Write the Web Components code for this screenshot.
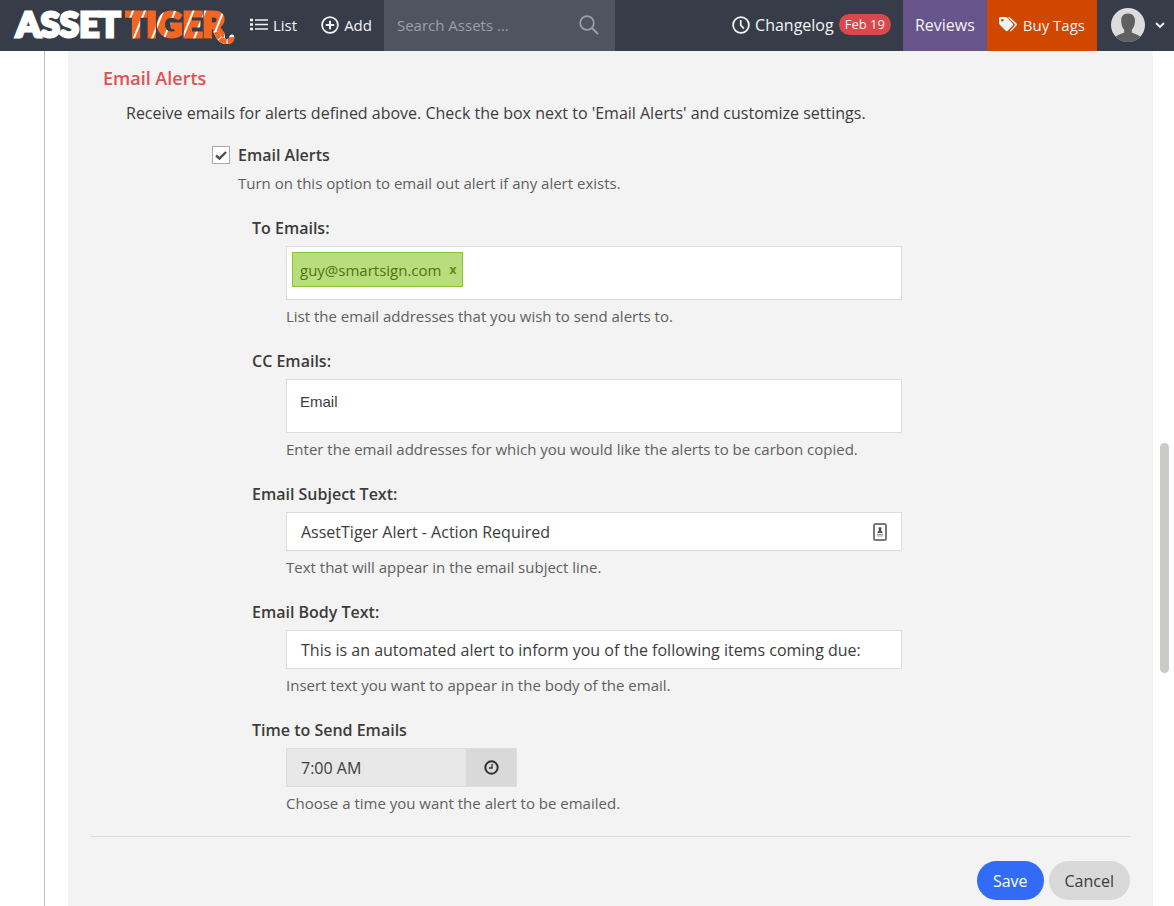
<!DOCTYPE html>
<html lang="en">
<head>
<meta charset="utf-8">
<meta name="viewport" content="width=device-width, initial-scale=1">
<title>AssetTiger - Alerts</title>
<style>
    :root {
        --bar-color: #363d49;
        --panel-color: #f3f3f3;
        --border-color: #dcdcdc;
        --text-color: #3c3c3c;
        --hint-color: #606060;
        --accent-color: #e05055;
    }
    html, body {
        margin: 0;
        background: #fff;
        color: var(--text-color);
        font-family: "Open Sans", "Noto Sans", sans-serif;
        font-size: 16px;
        line-height: 24px;
    }
    body {
        display: flex;
        flex-direction: column;
        min-height: 100vh;
        position: relative;
    }
</style>
</head>
<body>
<top-bar>
    <brand-logo slot="brand"></brand-logo>
    <nav-link icon="list" size="small">List</nav-link>
    <nav-link icon="add" size="small">Add</nav-link>
    <asset-search></asset-search>
    <nav-link slot="end" icon="clock" badge="Feb 19">Changelog</nav-link>
    <nav-link slot="end" tone="purple">Reviews</nav-link>
    <nav-link slot="end" icon="tags" tone="orange" size="small">Buy Tags</nav-link>
    <user-menu slot="end"></user-menu>
</top-bar>
<page-shell>
    <alert-settings>
        <tag-field label="To Emails:" value="guy@smartsign.com" hint="List the email addresses that you wish to send alerts to."></tag-field>
        <tag-field label="CC Emails:" hint="Enter the email addresses for which you would like the alerts to be carbon copied."></tag-field>
        <text-field label="Email Subject Text:" value="AssetTiger Alert - Action Required" autofill hint="Text that will appear in the email subject line."></text-field>
        <text-field label="Email Body Text:" value="This is an automated alert to inform you of the following items coming due:" hint="Insert text you want to appear in the body of the email."></text-field>
        <time-field label="Time to Send Emails" value="7:00 AM" hint="Choose a time you want the alert to be emailed."></time-field>
    </alert-settings>
</page-shell>
<scroll-thumb></scroll-thumb>

<script>
const icons = {
    list: `<svg width="18" height="18" viewBox="0 0 18 18" fill="none" stroke="currentColor" stroke-width="1.5">
        <path d="M5 4H18M5 8.500H18M5 13H18"/>
        <path d="M0 4h3M0 8.500h3M0 13h3" stroke-width="2.4"/></svg>`,
    add: `<svg width="18" height="18" viewBox="0 0 18 18" fill="none" stroke="currentColor" stroke-width="1.8">
        <circle cx="9" cy="9" r="7.9"/><path d="M9 4.8v8.4M4.8 9h8.4" stroke-width="2"/></svg>`,
    clock: `<svg width="18" height="18" viewBox="0 0 18 18" fill="none" stroke="currentColor" stroke-width="1.8">
        <circle cx="9" cy="9" r="7.9"/><path d="M8.7 4v5.2l3.2 3.4" stroke-width="1.7"/></svg>`,
    tags: `<svg width="19" height="15" viewBox="0 0 19 15" fill="currentColor">
        <path fill-rule="evenodd" d="M1.4 0h5.2c.6 0 1.200.3 1.600.7l5.500 5.700c.6.6.6 1.400 0 2l-5 5.300c-.6.6-1.400.6-2 0L.8 7.800C.4 7.400.1 6.700.1 6.100L0 1.500C0 .7.6 0 1.400 0zM3.400 2a1.300 1.300 0 1 0 0 2.600 1.300 1.300 0 0 0 0-2.600z"/>
        <path d="M8.700.2h1.500c.5 0 1 .3 1.400.7l5.900 5.700c.6.6.6 1.300 0 1.900l-5.200 5.400c-.5.5-1.200.5-1.700.1l4.700-4.900c.7-.8.7-1.800 0-2.500z"/></svg>`,
    search: `<svg width="20" height="20" viewBox="0 0 20 20" fill="none" stroke="currentColor" stroke-width="1.7">
        <circle cx="8" cy="8" r="6.800"/><path d="M13 13l6 6" stroke-width="2"/></svg>`,
    caret: `<svg width="10" height="7" viewBox="0 0 10 7" fill="none" stroke="currentColor" stroke-width="1.8"><path d="M1 1l4 4 4-4"/></svg>`,
    time: `<svg width="15" height="15" viewBox="0 0 15 15" fill="none" stroke="currentColor" stroke-width="2">
        <circle cx="7.500" cy="7.500" r="6.200"/><path d="M8 4v4H5" stroke-width="1.300"/></svg>`,
    contact: `<svg width="14" height="18" viewBox="0 0 14 18" fill="none">
        <rect x="1" y="1" width="12" height="16" rx="1.500" stroke="#777" stroke-width="2"/>
        <circle cx="7" cy="5.500" r="1.500" fill="#555"/><path d="M4 10L7 5.500l3 4.500z" fill="#555"/>
        <path d="M4 11.500h6M4 13h6" stroke="#999"/></svg>`
};

class TopBar extends HTMLElement {
    constructor() {
        super();
        this.attachShadow({ mode: 'open' });
    }

    connectedCallback() {
        this.shadowRoot.innerHTML = `
            <style>
                :host {
                    display: block;
                    background: var(--bar-color);
                    color: #f2f3f5;
                }
                header, nav {
                    display: flex;
                    height: 51px;
                }
                .end {
                    margin-left: auto;
                }
            </style>
            <header>
                <slot name="brand"></slot>
                <nav><slot></slot></nav>
                <nav class="end"><slot name="end"></slot></nav>
            </header>
        `;
    }
}

class BrandLogo extends HTMLElement {
    constructor() {
        super();
        this.attachShadow({ mode: 'open' });
    }

    connectedCallback() {
        this.shadowRoot.innerHTML = `
            <style>
                :host {
                    display: block;
                    width: 238px;
                }
                a {
                    display: flex;
                    position: relative;
                    gap: 5px;
                    padding-left: 16px;
                    color: #fff;
                    font-family: Lato, sans-serif;
                    font-weight: 900;
                    font-size: 35px;
                    line-height: 47px;
                    text-decoration: none;
                    -webkit-text-stroke: 3px #fff;
                }
                .tiger {
                    -webkit-text-stroke: 3px transparent;
                    color: transparent;
                    background: repeating-linear-gradient(112deg, #f26522 0 10px, #fff 11px 12px, #f26522 13px 21px, #fff 22px 23px, #f26522 24px 28px);
                    -webkit-background-clip: text;
                    background-clip: text;
                }
                svg {
                    position: absolute;
                    left: 211px;
                    top: 31px;
                }
            </style>
            <a href="#" aria-label="AssetTiger"><span>ASSET</span><span class="tiger">TIGER</span>
                <svg width="25" height="17" viewBox="0 0 25 17" fill="none">
                    <path d="M5 1C7 5 9 10 15 10.500c5 .3 6-2 5.800-4.500" stroke="#fff" stroke-width="5" stroke-linecap="round"/>
                    <path d="M5 1C7 5 9 10 15 10.500c5 .3 6-2 5.800-4.500" stroke="#f26522" stroke-width="5" stroke-dasharray="7 1"/>
                </svg>
            </a>
        `;
    }
}

class NavLink extends HTMLElement {
    constructor() {
        super();
        this.attachShadow({ mode: 'open' });
    }

    connectedCallback() {
        const icon = icons[this.getAttribute('icon')] || '';
        const badge = this.getAttribute('badge');

        this.shadowRoot.innerHTML = `
            <style>
                :host {
                    display: block;
                }
                :host([tone="purple"]) {
                    background: #67548a;
                }
                :host([tone="orange"]) {
                    background: #d04800;
                }
                :host([size="small"]) {
                    font-size: 15px;
                }
                a {
                    display: flex;
                    align-items: center;
                    gap: 5px;
                    height: 49px;
                    padding: 0 12px;
                    color: inherit;
                    text-decoration: none;
                    white-space: nowrap;
                }
                .badge {
                    padding: 0 6px;
                    border-radius: 11px;
                    background: #d9484b;
                    font-size: 13px;
                    line-height: 21px;
                }
            </style>
            <a href="#">${icon}<slot></slot>${badge ? `<span class="badge">${badge}</span>` : ''}</a>
        `;
    }
}

class AssetSearch extends HTMLElement {
    constructor() {
        super();
        this.attachShadow({ mode: 'open' });
    }

    connectedCallback() {
        this.shadowRoot.innerHTML = `
            <style>
                :host {
                    display: block;
                    width: 231px;
                    background: #4e5560;
                    font-size: 15px;
                }
                form {
                    display: flex;
                    align-items: center;
                    height: 50px;
                    padding: 0 16px 0 13px;
                }
                input {
                    flex: 1;
                    min-width: 0;
                    padding: 0;
                    border: 0;
                    background: none;
                    color: #fff;
                    font: inherit;
                }
                input::placeholder {
                    color: #9ba0a9;
                }
                button {
                    display: flex;
                    padding: 0;
                    border: 0;
                    background: none;
                    color: #9ba0a9;
                }
            </style>
            <form>
                <input type="text" placeholder="Search Assets ..." aria-label="Search Assets">
                <button type="button" aria-label="Search">${icons.search}</button>
            </form>
        `;
    }
}

class UserMenu extends HTMLElement {
    constructor() {
        super();
        this.attachShadow({ mode: 'open' });
    }

    connectedCallback() {
        this.shadowRoot.innerHTML = `
            <style>
                :host {
                    display: block;
                }
                button {
                    display: flex;
                    align-items: center;
                    gap: 10px;
                    height: 50px;
                    padding: 0 9px 0 14px;
                    border: 0;
                    background: none;
                    color: inherit;
                }
            </style>
            <button type="button" aria-label="Account">
                <svg width="34" height="34" viewBox="0 0 34 34">
                    <defs><clipPath id="round"><circle cx="17" cy="17" r="17"/></clipPath></defs>
                    <g clip-path="url(#round)">
                        <rect width="34" height="34" fill="#dcdcdc"/>
                        <path d="M17 5.500c-4.500 0-7 2.800-6.800 7 0 4.500 1.300 7.500 3 9.300v2.700c-3 1.500-7 2-9 5V34h25.600v-4.500c-2-3-6-3.500-9-5v-2.700c1.700-1.800 3.200-4.800 3.200-9.300 0-4.200-2.500-7-7-7z" fill="#606060"/>
                    </g>
                </svg>
                ${icons.caret}
            </button>
        `;
    }
}

class PageShell extends HTMLElement {
    constructor() {
        super();
        this.attachShadow({ mode: 'open' });
    }

    connectedCallback() {
        this.shadowRoot.innerHTML = `
            <style>
                :host {
                    display: flex;
                    flex: 1;
                }
                aside {
                    flex: 0 0 44px;
                    border-right: 1px solid #b4bfc4;
                }
                main {
                    flex: 1;
                    min-width: 0;
                    margin: 0 21px 0 23px;
                    background: var(--panel-color);
                }
            </style>
            <aside></aside>
            <main><slot></slot></main>
        `;
    }
}

class AlertSettings extends HTMLElement {
    constructor() {
        super();
        this.attachShadow({ mode: 'open' });
    }

    connectedCallback() {
        this.shadowRoot.innerHTML = `
            <style>
                :host {
                    display: block;
                    padding: 15px 23px 6px;
                }
                h2 {
                    margin: 0 12px;
                    color: var(--accent-color);
                    font-size: 18px;
                    font-weight: 600;
                    line-height: 24px;
                }
                p {
                    margin: 11px 35px 0;
                }
                .toggle {
                    display: grid;
                    grid-template-columns: 18px 1fr;
                    column-gap: 8px;
                    row-gap: 4px;
                    align-items: center;
                    margin: 18px 0 21px 121px;
                }
                .toggle label {
                    font-weight: 600;
                }
                .toggle small {
                    grid-column: 2;
                    color: var(--hint-color);
                    font-size: 15px;
                }
                input {
                    appearance: none;
                    width: 18px;
                    height: 18px;
                    margin: 0;
                    border: 1px solid #aaa;
                    background: #fff;
                }
                input:checked {
                    background: #fff url("data:image/svg+xml,%3Csvg xmlns='http://www.w3.org/2000/svg' width='16' height='16' fill='none' stroke='%23505050' stroke-width='2.400'%3E%3Cpath d='M3 8.500l3.500 3L13 5'/%3E%3C/svg%3E") center no-repeat;
                }
                .fields {
                    display: flex;
                    flex-direction: column;
                    gap: 21px;
                    margin-left: 161px;
                }
                footer {
                    display: flex;
                    justify-content: flex-end;
                    gap: 5px;
                    margin-top: 21px;
                    padding-top: 24px;
                    border-top: 1px solid var(--border-color);
                }
                button {
                    height: 39px;
                    padding: 0 16px;
                    border: 0;
                    border-radius: 20px;
                    background: #d9d9d9;
                    color: var(--text-color);
                    font: inherit;
                }
                .primary {
                    background: #326cf6;
                    color: #fff;
                }
            </style>
            <h2>Email Alerts</h2>
            <p>Receive emails for alerts defined above. Check the box next to 'Email Alerts' and customize settings.</p>
            <div class="toggle">
                <input type="checkbox" id="enabled" checked>
                <label for="enabled">Email Alerts</label>
                <small>Turn on this option to email out alert if any alert exists.</small>
            </div>
            <div class="fields"><slot></slot></div>
            <footer>
                <button type="button" class="primary">Save</button>
                <button type="button">Cancel</button>
            </footer>
        `;
    }
}

// Label on top, control in the middle, hint below. Subclasses supply the control.
class FormField extends HTMLElement {
    constructor() {
        super();
        this.attachShadow({ mode: 'open' });
    }

    connectedCallback() {
        this.shadowRoot.innerHTML = `
            <style>
                :host {
                    display: block;
                }
                label {
                    display: block;
                    font-weight: 600;
                }
                .body {
                    max-width: 616px;
                    margin: 6px 0 0 34px;
                }
                .box {
                    display: flex;
                    align-items: center;
                    box-sizing: border-box;
                    height: 39px;
                    border: 1px solid var(--border-color);
                    background: #fff;
                }
                input {
                    flex: 1;
                    min-width: 0;
                    padding: 0 14px;
                    border: 0;
                    background: none;
                    color: var(--text-color);
                    font: inherit;
                }
                small {
                    display: block;
                    margin-top: 4px;
                    color: var(--hint-color);
                    font-size: 15px;
                }
                ${this.styles()}
            </style>
            <label for="control">${this.getAttribute('label')}</label>
            <div class="body">
                ${this.control()}
                <small>${this.getAttribute('hint')}</small>
            </div>
        `;
    }

    styles() {
        return '';
    }

    control() {
        return '';
    }
}

class TextField extends FormField {
    styles() {
        return `
            svg {
                margin-right: 14px;
            }
        `;
    }

    control() {
        const icon = this.hasAttribute('autofill') ? icons.contact : '';
        return `<div class="box"><input type="text" id="control" value="${this.getAttribute('value')}">${icon}</div>`;
    }
}

class TagField extends FormField {
    styles() {
        return `
            .box {
                height: 54px;
                align-items: flex-start;
                padding: 5px;
            }
            .tag {
                display: flex;
                align-items: center;
                gap: 8px;
                box-sizing: border-box;
                height: 35px;
                padding: 0 6px 0 7px;
                border: 1px solid #86c734;
                background: #b9dd7c;
                color: #4d7410;
                font-size: 15px;
            }
            .tag button {
                padding: 0;
                border: 0;
                background: none;
                color: #57900f;
                font: inherit;
                font-size: 12px;
                font-weight: 700;
            }
            input {
                height: 20px;
                margin-top: 7px;
                padding: 0 8px;
                font-family: "Liberation Sans", Arial, sans-serif;
                font-size: 15px;
            }
            input::placeholder {
                color: var(--text-color);
            }
        `;
    }

    control() {
        const value = this.getAttribute('value');
        const tag = value ? `<span class="tag">${value}<button type="button" aria-label="Remove">x</button></span>` : '';
        return `<div class="box">${tag}<input type="text" id="control" placeholder="${value ? '' : 'Email'}"></div>`;
    }
}

class TimeField extends FormField {
    styles() {
        return `
            .box {
                width: 231px;
                background: #e7e7e7;
            }
            button {
                display: flex;
                align-items: center;
                justify-content: center;
                width: 50px;
                height: 37px;
                padding: 0;
                border: 0;
                background: #d9d9d9;
                color: #303030;
            }
        `;
    }

    control() {
        return `
            <div class="box">
                <input type="text" id="control" value="${this.getAttribute('value')}" readonly>
                <button type="button" aria-label="Pick a time">${icons.time}</button>
            </div>
        `;
    }
}

class ScrollThumb extends HTMLElement {
    constructor() {
        super();
        this.attachShadow({ mode: 'open' });
    }

    connectedCallback() {
        this.shadowRoot.innerHTML = `
            <style>
                :host {
                    display: block;
                    position: absolute;
                    right: 5px;
                    top: 443px;
                    width: 9px;
                    height: 230px;
                    border-radius: 5px;
                    background: #cbcac9;
                }
            </style>
        `;
    }
}

customElements.define('top-bar', TopBar);
customElements.define('brand-logo', BrandLogo);
customElements.define('nav-link', NavLink);
customElements.define('asset-search', AssetSearch);
customElements.define('user-menu', UserMenu);
customElements.define('page-shell', PageShell);
customElements.define('alert-settings', AlertSettings);
customElements.define('text-field', TextField);
customElements.define('tag-field', TagField);
customElements.define('time-field', TimeField);
customElements.define('scroll-thumb', ScrollThumb);
</script>
</body>
</html>
